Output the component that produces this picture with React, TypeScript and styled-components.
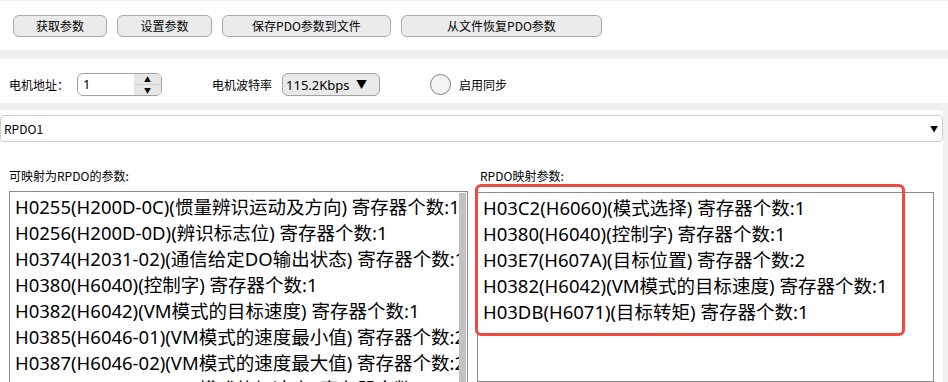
import React from 'react'
import styled, { createGlobalStyle } from 'styled-components'

const GlobalStyle = createGlobalStyle`
  html, body {
    margin: 0;
    padding: 0;
    background: #f0f0f0;
  }
  body {
    font-family: "Noto Sans", "Noto Sans CJK SC", sans-serif;
    color: #000;
    overflow: hidden;
  }
`

const Page = styled.div`
  width: 948px;
  height: 382px;
  padding-top: 1px;
  box-sizing: border-box;
  display: flex;
  flex-direction: column;
  overflow: hidden;
`

const Panel = styled.div<{ $top?: number; $right?: number }>`
  background: #fff;
  margin-top: ${p => p.$top || 0}px;
  margin-right: ${p => p.$right || 0}px;
`

const Toolbar = styled(Panel)`
  height: 49px;
  display: flex;
  align-items: center;
  gap: 10px;
  padding-left: 13px;
`

const ToolButton = styled.button<{ $w: number }>`
  width: ${p => p.$w}px;
  height: 22px;
  padding: 0;
  border: 1px solid #a9a9a9;
  border-radius: 6px;
  background: #ebebeb;
  font-family: "Noto Sans CJK SC", sans-serif;
  font-size: 12px;
  color: #000;
`

const Settings = styled(Panel)`
  height: 44px;
  box-sizing: border-box;
  padding: 14px 0 0 9px;
  display: flex;
  align-items: flex-start;
`

const Label = styled.span<{ $left?: number }>`
  margin-left: ${p => p.$left || 0}px;
  height: 23px;
  line-height: 23px;
  font-family: "Noto Sans CJK SC", sans-serif;
  font-size: 12px;
`

const Spin = styled.div<{ $left: number }>`
  margin-left: ${p => p.$left}px;
  width: 85px;
  height: 23px;
  box-sizing: border-box;
  border: 1px solid #a3a3a3;
  border-radius: 6px;
  display: flex;
  overflow: hidden;
`

const SpinValue = styled.div`
  flex: 1;
  padding-left: 5px;
  font-size: 13px;
  line-height: 21px;
`

const SpinArrows = styled.div`
  width: 27px;
  display: flex;
  flex-direction: column;
  background: #e6e6e6;
`

const SpinArrow = styled.div<{ $divider?: boolean }>`
  flex: 1;
  display: flex;
  align-items: center;
  justify-content: center;
  font-size: 7px;
  line-height: 1;
  border-top: ${p => (p.$divider ? '1px solid #cfcfcf' : 'none')};
`

const Select = styled.div<{ $left: number }>`
  margin-left: ${p => p.$left}px;
  width: 98px;
  height: 23px;
  box-sizing: border-box;
  border: 1px solid #a3a3a3;
  border-radius: 6px;
  background: #e9e9e9;
  display: flex;
  align-items: center;
  justify-content: space-between;
  padding: 0 12px 0 3px;
  font-size: 13px;
`

const Caret = styled.span<{ $size: number }>`
  font-size: ${p => p.$size}px;
  line-height: 1;
`

const Radio = styled.div<{ $left: number }>`
  margin-left: ${p => p.$left}px;
  margin-top: 1px;
  width: 21px;
  height: 21px;
  box-sizing: border-box;
  border: 1.5px solid #7c7c7c;
  border-radius: 50%;
  background: #f4f4f4;
`

const ListPanel = styled(Panel)`
  flex: 1;
  padding-top: 5px;
  display: flex;
  flex-direction: column;
  min-height: 0;
`

const PdoSelect = styled.div`
  height: 27px;
  box-sizing: border-box;
  border: 1px solid #cdcdcd;
  border-radius: 4px;
  display: flex;
  align-items: center;
  justify-content: space-between;
  padding: 0 4px 0 3px;
  font-family: "Noto Sans CJK SC", sans-serif;
  font-size: 12px;
`

const Columns = styled.div`
  flex: 1;
  min-height: 0;
  display: grid;
  grid-template-columns: 459px 457px;
  column-gap: 9px;
  padding: 27px 0 0 9px;
`

const Column = styled.div`
  display: flex;
  flex-direction: column;
  min-height: 0;
`

const Caption = styled.div<{ $indent?: number }>`
  padding-left: ${p => p.$indent || 0}px;
  height: 20px;
  font-family: "Noto Sans CJK SC", sans-serif;
  font-size: 12px;
  line-height: 14px;
  margin-bottom: 8px;
`

const ListBox = styled.div<{ $top?: number }>`
  position: relative;
  margin-top: ${p => p.$top || 0}px;
  height: 260px;
  border: 1px solid #8a8a8a;
  background: #fff;
  display: flex;
`

const Items = styled.div`
  flex: 1;
  overflow: hidden;
  padding: 2px 0 0 5px;
`

const Item = styled.div`
  white-space: nowrap;
  font-size: 18.5px;
  line-height: 26px;
`

const ScrollTrack = styled.div`
  width: 8px;
  padding: 1px 1px 0 0;
  box-sizing: border-box;
  display: flex;
`

const ScrollThumb = styled.div`
  flex: 1;
  background: #c2c2c2;
`

const Highlight = styled.div`
  position: absolute;
  left: -3px;
  top: -9px;
  width: 430px;
  height: 152px;
  box-sizing: border-box;
  border: 3px solid #ee4b40;
  border-radius: 6px;
  pointer-events: none;
`

const available = [
  'H0255(H200D-0C)(惯量辨识运动及方向) 寄存器个数:1',
  'H0256(H200D-0D)(辨识标志位) 寄存器个数:1',
  'H0374(H2031-02)(通信给定DO输出状态) 寄存器个数:1',
  'H0380(H6040)(控制字) 寄存器个数:1',
  'H0382(H6042)(VM模式的目标速度) 寄存器个数:1',
  'H0385(H6046-01)(VM模式的速度最小值) 寄存器个数:2',
  'H0387(H6046-02)(VM模式的速度最大值) 寄存器个数:2',
  'H0389(H6048-01)(VM模式的加速度) 寄存器个数:2',
]

const mapped = [
  'H03C2(H6060)(模式选择) 寄存器个数:1',
  'H0380(H6040)(控制字) 寄存器个数:1',
  'H03E7(H607A)(目标位置) 寄存器个数:2',
  'H0382(H6042)(VM模式的目标速度) 寄存器个数:1',
  'H03DB(H6071)(目标转矩) 寄存器个数:1',
]

const App = () => {
  return (
    <Page>
      <GlobalStyle />
      <Toolbar>
        <ToolButton $w={94}>获取参数</ToolButton>
        <ToolButton $w={95}>设置参数</ToolButton>
        <ToolButton $w={169}>保存PDO参数到文件</ToolButton>
        <ToolButton $w={201}>从文件恢复PDO参数</ToolButton>
      </Toolbar>

      <Settings $top={9}>
        <Label>电机地址：</Label>
        <Spin $left={8}>
          <SpinValue>1</SpinValue>
          <SpinArrows>
            <SpinArrow>▲</SpinArrow>
            <SpinArrow $divider>▼</SpinArrow>
          </SpinArrows>
        </Spin>
        <Label $left={50}>电机波特率</Label>
        <Select $left={10}>
          115.2Kbps
          <Caret $size={11}>▼</Caret>
        </Select>
        <Radio $left={50} />
        <Label $left={8}>启用同步</Label>
      </Settings>

      <ListPanel $top={7} $right={5}>
        <PdoSelect>
          RPDO1
          <Caret $size={8}>▼</Caret>
        </PdoSelect>
        <Columns>
          <Column>
            <Caption>可映射为RPDO的参数:</Caption>
            <ListBox>
              <Items>
                {available.map(t => (
                  <Item key={t}>{t}</Item>
                ))}
              </Items>
              <ScrollTrack>
                <ScrollThumb />
              </ScrollTrack>
            </ListBox>
          </Column>
          <Column>
            <Caption $indent={3}>RPDO映射参数:</Caption>
            <ListBox $top={1}>
              <Items>
                {mapped.map(t => (
                  <Item key={t}>{t}</Item>
                ))}
              </Items>
              <Highlight />
            </ListBox>
          </Column>
        </Columns>
      </ListPanel>
    </Page>
  )
}

export default App
